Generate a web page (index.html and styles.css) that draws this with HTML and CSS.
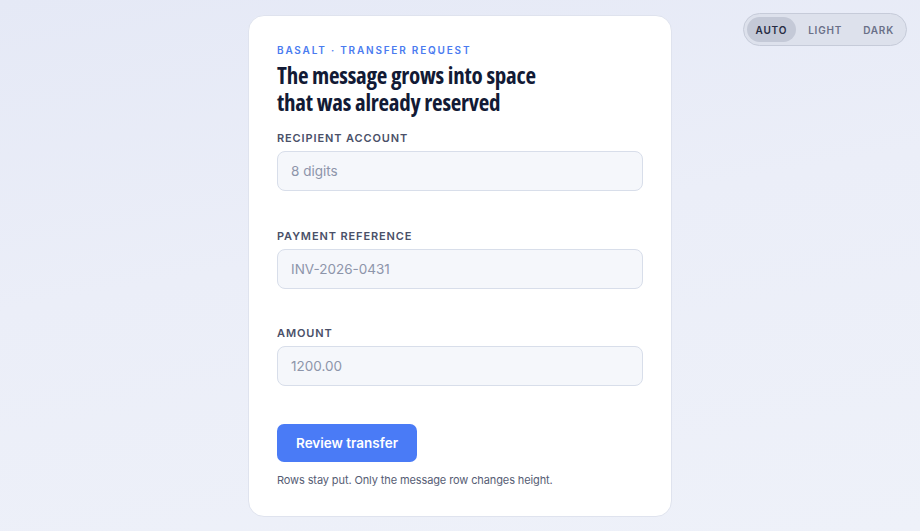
FILE: index.html
```html
<!DOCTYPE html>
<html lang="en">
<head>
  <meta charset="UTF-8" />
  <meta name="viewport" content="width=device-width, initial-scale=1.0"/>
  <title>Basalt · Transfer request</title>
  <link rel="stylesheet" href="styles.css">
</head>
<body>

  <div class="tema">
    <button class="ativo">AUTO</button>
    <button>LIGHT</button>
    <button>DARK</button>
  </div>

  <!-- Card: transfer request -->
  <form class="cartao" onsubmit="return false">
    <p class="sobretitulo">BASALT · TRANSFER REQUEST</p>
    <h1>The message grows into space that was already reserved</h1>

    <div class="linha">
      <label for="conta">RECIPIENT ACCOUNT</label>
      <input type="text" id="conta" placeholder="8 digits">
      <div class="mensagem"></div>
    </div>

    <div class="linha">
      <label for="referencia">PAYMENT REFERENCE</label>
      <input type="text" id="referencia" placeholder="INV-2026-0431">
      <div class="mensagem"></div>
    </div>

    <div class="linha">
      <label for="valor">AMOUNT</label>
      <input type="text" id="valor" placeholder="1200.00">
      <div class="mensagem"></div>
    </div>

    <button class="enviar">Review transfer</button>
    <p class="nota">Rows stay put. Only the message row changes height.</p>
  </form>

</body>
</html>
```

FILE: styles.css
```css
body {
  font-family: Inter, "Noto Sans", sans-serif;
  margin: 0;
  height: 531px;
  overflow: hidden;
  background: linear-gradient(170deg, #e5e9f6 0%, #ebeef8 45%, #eef1f9 100%);
  padding-top: 15px;
  box-sizing: border-box;
}
.cartao {
  width: 424px;
  box-sizing: border-box;
  margin: 0 auto;
  background: #fff;
  border: 1px solid #dfe3ee;
  border-radius: 16px;
  padding: 27px 28px 28px;
}
.sobretitulo {
  margin: 0;
  color: #4a7bf0;
  font-size: 10px;
  font-weight: 600;
  letter-spacing: 0.18em;
  line-height: 14px;
}
h1 {
  margin: 5px 0 15px;
  max-width: 280px;
  font-family: "Open Sans", sans-serif;
  font-stretch: 75%;
  font-weight: 700;
  font-size: 23px;
  letter-spacing: -0.01em;
  line-height: 27px;
  color: #121a35;
}
.linha {
  display: flex;
  flex-direction: column;
}
label {
  font-size: 11px;
  font-weight: 600;
  letter-spacing: 0.08em;
  color: #4a5068;
  line-height: 14px;
  margin-bottom: 6px;
}
input {
  height: 40px;
  box-sizing: border-box;
  padding: 0 13px;
  border: 1px solid #d8deea;
  border-radius: 8px;
  background: #f5f7fb;
  font-family: inherit;
  font-size: 13.5px;
  color: #1c2238;
}
input::placeholder {
  color: #8d95aa;
}
.mensagem {
  height: 37.5px;
}
.enviar {
  align-self: flex-start;
  height: 38px;
  padding: 0 19px;
  background-color: #4a7bf6;
  color: white;
  border: none;
  border-radius: 7px;
  font-family: inherit;
  font-size: 13.5px;
  font-weight: 600;
  cursor: pointer;
}
.nota {
  margin: 10px 0 0;
  font-size: 11px;
  letter-spacing: -0.01em;
  line-height: 16px;
  color: #565d74;
}
.tema {
  position: absolute;
  top: 13px;
  right: 13px;
  display: flex;
  gap: 3px;
  padding: 3px;
  background: #dde1ec;
  border: 1px solid #c6cbd9;
  border-radius: 20px;
}
.tema button {
  height: 25px;
  padding: 0 9px;
  border: none;
  border-radius: 14px;
  background: none;
  font-family: inherit;
  font-size: 10px;
  font-weight: 600;
  letter-spacing: 0.08em;
  color: #6a7088;
  cursor: pointer;
}
.tema button.ativo {
  background: #c4c9d7;
  color: #262b42;
}
```
